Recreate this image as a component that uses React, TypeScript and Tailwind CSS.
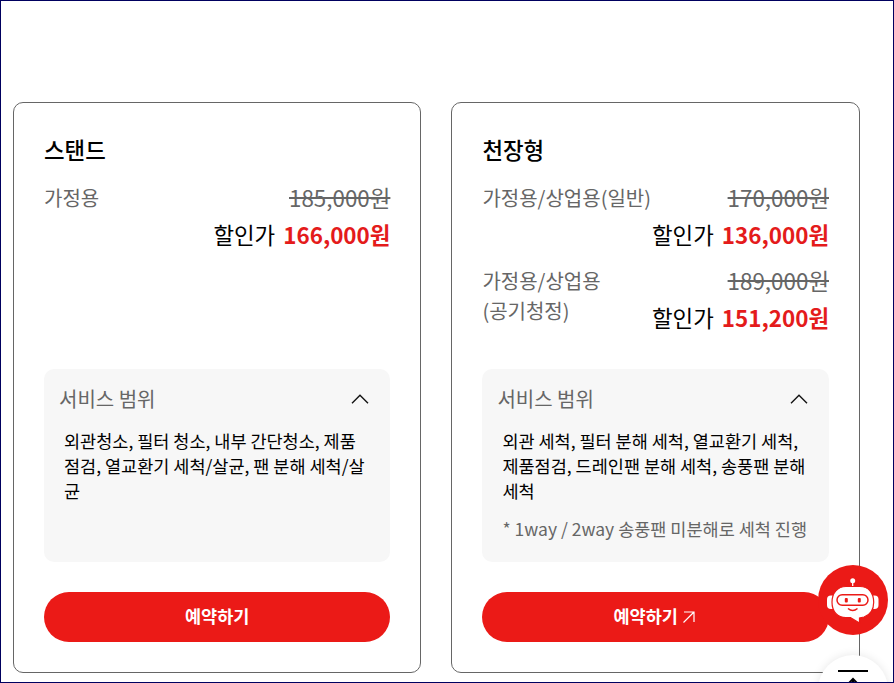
import React from "react";

interface PriceRow {
  label: string[];
  original: string;
  discounted: string;
}

interface Plan {
  name: string;
  prices: PriceRow[];
  scope: string[];
  note?: string;
  external?: boolean;
}

const plans: Plan[] = [
  {
    name: "스탠드",
    prices: [{ label: ["가정용"], original: "185,000원", discounted: "166,000원" }],
    scope: ["외관청소, 필터 청소, 내부 간단청소, 제품", "점검, 열교환기 세척/살균, 팬 분해 세척/살", "균"],
  },
  {
    name: "천장형",
    prices: [
      { label: ["가정용/상업용(일반)"], original: "170,000원", discounted: "136,000원" },
      { label: ["가정용/상업용", "(공기청정)"], original: "189,000원", discounted: "151,200원" },
    ],
    scope: ["외관 세척, 필터 분해 세척, 열교환기 세척,", "제품점검, 드레인팬 분해 세척, 송풍팬 분해", "세척"],
    note: "* 1way / 2way 송풍팬 미분해로 세척 진행",
    external: true,
  },
];

const PlanCard: React.FC<{ plan: Plan }> = ({ plan }) => (
  <section className="flex h-[571px] flex-col rounded-[10px] border border-[#666] p-[30px]">
    <h2 className="h-[32px] text-[22.4px] leading-[32px] font-medium text-black">{plan.name}</h2>
    <div className="mt-[18px] flex flex-1 flex-col gap-[9px]">
      {plan.prices.map((price) => (
        <div key={price.original} className="flex h-[74px] justify-between">
          <div className="text-[20px] leading-[30px] text-[#666]">
            {price.label.map((line) => (
              <div key={line} className="whitespace-nowrap">{line}</div>
            ))}
          </div>
          <div className="text-right text-[22.4px] whitespace-nowrap">
            <div className="h-[33px] leading-[28px] text-[#666] line-through">{price.original}</div>
            <div className="leading-[37px] text-black">
              할인가 <strong className="ml-[3px] font-bold text-[#e41b1b]">{price.discounted}</strong>
            </div>
          </div>
        </div>
      ))}
    </div>
    <div className="h-[193px] rounded-[10px] bg-[#f7f7f7] px-[15px] pt-[15px]">
      <div className="flex h-[30px] items-center justify-between pr-[6px]">
        <h3 className="text-[20px] leading-[30px] text-[#666]">서비스 범위</h3>
        <svg className="h-[10px] w-[18px]" viewBox="0 0 18 10" fill="none" stroke="#111" strokeWidth="1.4">
          <path d="M1 9.2L9 1.2L17 9.2" />
        </svg>
      </div>
      <div className="mt-[14px] pl-[5px] text-[17.5px] leading-[25px] whitespace-nowrap text-black">
        {plan.scope.map((line) => (
          <div key={line}>{line}</div>
        ))}
        {plan.note && <p className="mt-[13px] text-[#666]">{plan.note}</p>}
      </div>
    </div>
    <button className="mt-[30px] flex h-[50px] shrink-0 items-center justify-center gap-[5px] rounded-full bg-[#eb1a17] pb-px text-[17.5px] font-bold text-white">
      <span>예약하기</span>
      {plan.external && (
        <svg className="mr-[3px] h-[12px] w-[12px]" viewBox="0 0 12 12" fill="none" stroke="white" strokeWidth="1.2">
          <path d="M.5 11.5L11 1M1 1H11V11" />
        </svg>
      )}
    </button>
  </section>
);

const ChatbotButton: React.FC = () => (
  <button aria-label="챗봇" className="absolute top-[564px] left-[817px] h-[70px] w-[70px] rounded-full bg-[#eb1a17]">
    <svg className="h-[70px] w-[70px]" viewBox="0 0 70 70" fill="none">
      <path d="M34.7 24V16" stroke="white" strokeWidth="1.3" />
      <circle cx="34.7" cy="15.8" r="2.5" fill="white" />
      <rect x="9" y="30.5" width="9" height="13.5" rx="4" fill="white" />
      <rect x="51.5" y="30.5" width="9" height="13.5" rx="4" fill="white" />
      <path
        d="M28 21.5H42C50.5 21.5 55.7 28 55.7 37.3C55.7 44.5 52 50 46 52L41.5 53V58L32.5 52.7H28C19.5 52.7 14 46.5 14 37.3S19.5 21.5 28 21.5Z"
        fill="white"
        stroke="#eb1a17"
        strokeWidth="1.2"
      />
      <rect x="19" y="29.8" width="31" height="10.5" rx="5.2" stroke="#eb1a17" strokeWidth="1.5" />
      <rect x="26.8" y="33" width="3" height="4.5" rx="1" fill="#eb1a17" />
      <rect x="39.8" y="33" width="3" height="4.5" rx="1" fill="#eb1a17" />
      <path d="M30 43.5Q34.7 47.5 39.5 43.5" stroke="#eb1a17" strokeWidth="1.5" />
    </svg>
  </button>
);

const TopButton: React.FC = () => (
  <button
    aria-label="맨 위로"
    className="absolute top-[654px] left-[817px] flex h-[70px] w-[70px] justify-center rounded-full bg-white pt-[15px] shadow-[0_0_10px_rgba(0,0,0,0.1)]"
  >
    <svg className="h-[34px] w-[30px]" viewBox="0 0 30 34" fill="none" stroke="black" strokeWidth="2">
      <path d="M0 1H30M15 10V34M6 18L15 9L24 18" />
    </svg>
  </button>
);

const App: React.FC = () => (
  <main className="relative h-[683px] w-[894px] overflow-hidden border border-[#00005f] bg-white px-[12px] pt-[101px] font-['Noto_Sans_CJK_KR',sans-serif]">
    <div className="grid grid-cols-[408.4px_408.6px] gap-[30px]">
      {plans.map((plan) => (
        <PlanCard key={plan.name} plan={plan} />
      ))}
    </div>
    <ChatbotButton />
    <TopButton />
  </main>
);

export default App;
